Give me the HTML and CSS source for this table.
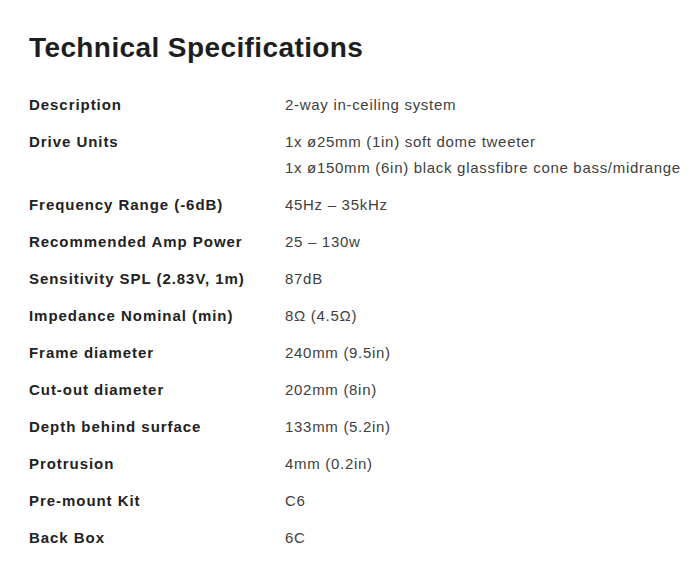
FILE: index.html
```html
<!DOCTYPE html>
<html lang="en">
<head>
<meta charset="utf-8">
<title>Technical Specifications</title>
<link rel="stylesheet" href="styles.css">
</head>
<body>
<main class="specs">
  <h1 class="specs-title">Technical Specifications</h1>
  <dl class="specs-list">
    <dt>Description</dt><dd>2-way in-ceiling system</dd>
    <dt>Drive Units</dt><dd>1x ø25mm (1in) soft dome tweeter<br>1x ø150mm (6in) black glassfibre cone bass/midrange</dd>
    <dt>Frequency Range (-6dB)</dt><dd>45Hz – 35kHz</dd>
    <dt>Recommended Amp Power</dt><dd>25 – 130w</dd>
    <dt>Sensitivity SPL (2.83V, 1m)</dt><dd>87dB</dd>
    <dt>Impedance Nominal (min)</dt><dd>8Ω (4.5Ω)</dd>
    <dt>Frame diameter</dt><dd>240mm (9.5in)</dd>
    <dt>Cut-out diameter</dt><dd>202mm (8in)</dd>
    <dt>Depth behind surface</dt><dd>133mm (5.2in)</dd>
    <dt>Protrusion</dt><dd>4mm (0.2in)</dd>
    <dt>Pre-mount Kit</dt><dd>C6</dd>
    <dt>Back Box</dt><dd>6C</dd>
  </dl>
</main>
</body>
</html>
```
FILE: styles.css
```css
html, body {
  margin: 0;
  padding: 0;
  background: #ffffff;
}
body {
  font-family: "Liberation Sans", Arial, sans-serif;
  color: #222222;
}
.specs {
  padding: 32px 0 0 29px;
}
.specs-title {
  margin: 0 0 28px 0;
  font-size: 28px;
  line-height: 32px;
  font-weight: 700;
  color: #1e1e1e;
  letter-spacing: 0.4px;
}
.specs-list {
  margin: 0;
  display: grid;
  grid-template-columns: 256px 1fr;
  row-gap: 11px;
  font-size: 15px;
  line-height: 26px;
}
.specs-list dt {
  font-weight: 700;
  color: #222222;
  letter-spacing: 0.95px;
}
.specs-list dd {
  margin: 0;
  color: #404040;
  letter-spacing: 0.7px;
}
```
